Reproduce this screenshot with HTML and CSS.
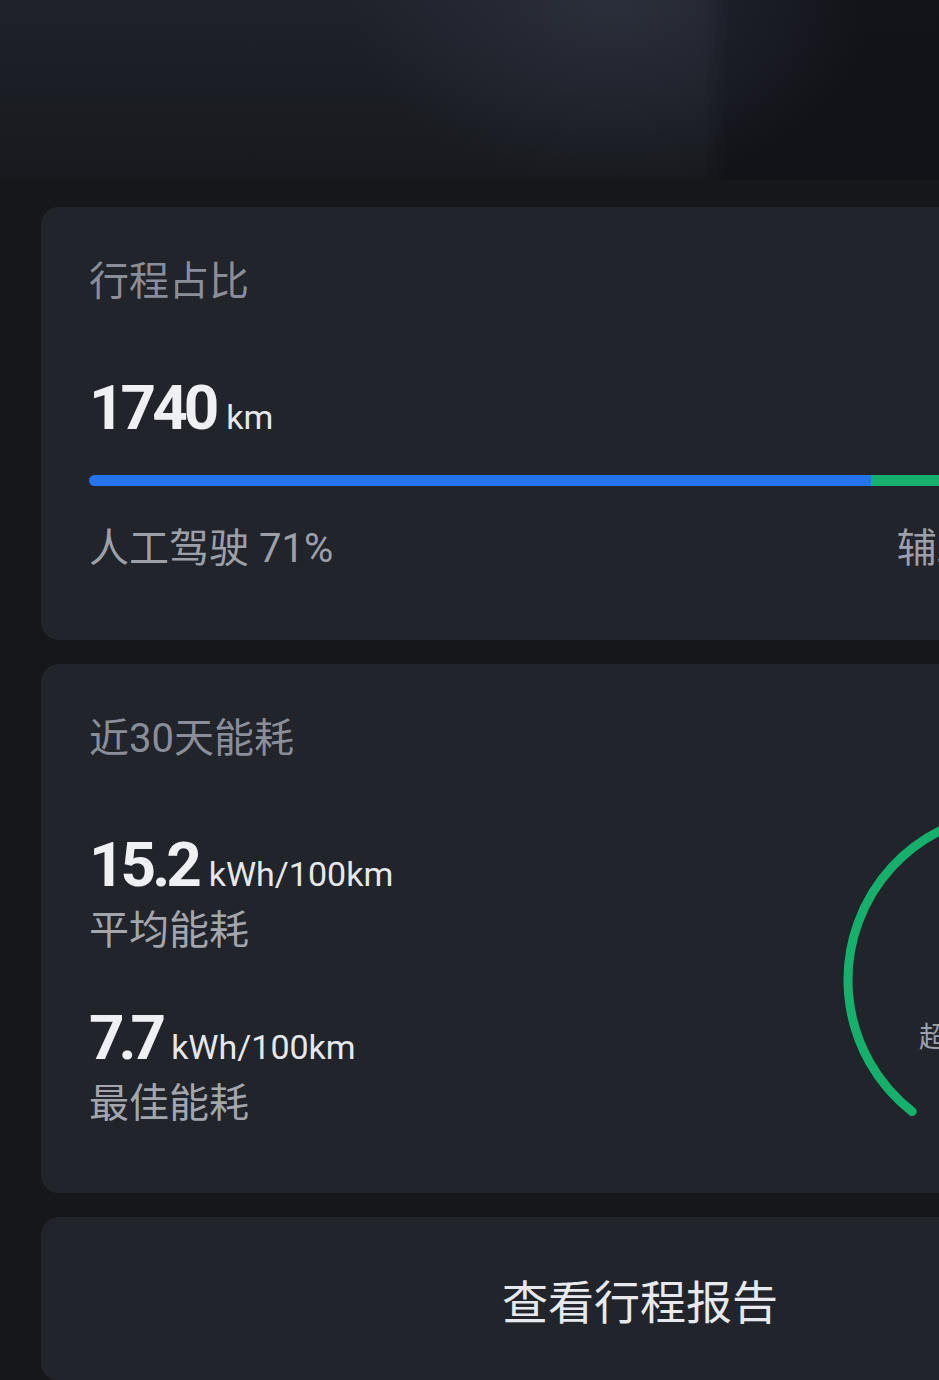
FILE: index.html
```html
<!DOCTYPE html>
<html lang="zh-CN">
<head>
    <meta charset="UTF-8">
    <meta name="viewport" content="width=device-width, initial-scale=1.0">
    <title>行程统计</title>
    <link rel="stylesheet" href="styles.css">
</head>
<body>
    <div class="page">
        <div class="hero"></div>

        <div class="cards">
            <section class="card trip">
                <h2 class="card-title">行程占比</h2>
                <div class="figure trip-total">
                    <span class="num">1740</span>
                    <span class="unit">km</span>
                </div>
                <div class="ratio-bar">
                    <span class="seg manual" style="width: 71%"></span>
                    <span class="seg assist"></span>
                </div>
                <div class="ratio-labels">
                    <span>人工驾驶 71%</span>
                    <span class="assist-label">辅助驾驶 29%</span>
                </div>
            </section>

            <section class="card energy">
                <h2 class="card-title">近30天能耗</h2>
                <div class="energy-body">
                    <div class="stats">
                        <div class="stat">
                            <div class="figure">
                                <span class="num">15.2</span>
                                <span class="unit">kWh/100km</span>
                            </div>
                            <div class="stat-label">平均能耗</div>
                        </div>
                        <div class="stat">
                            <div class="figure">
                                <span class="num tight">7.7</span>
                                <span class="unit">kWh/100km</span>
                            </div>
                            <div class="stat-label">最佳能耗</div>
                        </div>
                    </div>
                    <div class="gauge">
                        <svg width="352" height="352" viewBox="0 0 352 352">
                            <path d="M73.2 307.6 A167 167 0 1 1 278.8 307.6" fill="none" stroke="#16b06d" stroke-width="9" stroke-linecap="round"/>
                        </svg>
                        <div class="gauge-label">超越92%的车主</div>
                    </div>
                </div>
            </section>

            <a class="card report-link" href="#">查看行程报告</a>
        </div>
    </div>
</body>
</html>
```

FILE: styles.css
```css
html, body {
    margin: 0;
    overflow: hidden;
}
body {
    background-color: #15171b;
    font-family: Roboto, "Noto Sans CJK SC", sans-serif;
}
.page {
    width: 1280px;
}
.hero {
    height: 180px;
    background:
        radial-gradient(ellipse 260px 190px at 610px 0, rgba(52, 57, 72, 0.55), rgba(52, 57, 72, 0)),
        linear-gradient(90deg, rgba(17, 18, 24, 0) 700px, rgba(17, 18, 24, 0.9) 730px),
        linear-gradient(180deg, #1f222a, #17191e);
}
.cards {
    display: flex;
    flex-direction: column;
    gap: 24px;
    padding: 27px 0 0 41px;
}
.card {
    box-sizing: border-box;
    width: 1198px;
    padding: 55px 48px 71px;
    background-color: #21242b;
    border-radius: 18px;
}
.card-title {
    margin: 0;
    font-size: 40px;
    line-height: 40px;
    font-weight: 400;
    color: #8a8e9a;
}
.figure {
    display: flex;
    align-items: baseline;
    height: 62px;
    color: #eef0f3;
}
.num {
    font-size: 62px;
    line-height: 62px;
    font-weight: 700;
    letter-spacing: -4px;
}
.num.tight {
    letter-spacing: -6px;
}
.unit {
    margin-left: 11px;
    font-size: 34px;
    line-height: 34px;
    color: #e6e8ec;
}
.trip-total {
    margin-top: 75px;
}
.ratio-bar {
    display: flex;
    height: 11px;
    margin-top: 36px;
    border-radius: 6px;
    overflow: hidden;
}
.manual {
    background-color: #2574ec;
}
.assist {
    flex: 1;
    background-color: #14b06c;
}
.ratio-labels {
    display: flex;
    justify-content: space-between;
    margin-top: 43px;
    font-size: 40px;
    line-height: 40px;
    color: #9da0a8;
}
.assist-label {
    margin-right: 50px;
}
.energy {
    padding-bottom: 37px;
}
.energy-body {
    display: flex;
    justify-content: space-between;
    align-items: flex-start;
}
.stats {
    padding-top: 75px;
}
.stat + .stat {
    margin-top: 56px;
}
.stat-label {
    margin-top: 15px;
    font-size: 40px;
    line-height: 40px;
    color: #a3a6ad;
}
.gauge {
    position: relative;
    flex-shrink: 0;
    width: 352px;
    height: 352px;
    margin-top: 45px;
}
.gauge svg {
    display: block;
}
.gauge-label {
    position: absolute;
    left: 0;
    right: 0;
    top: 220px;
    text-align: center;
    font-size: 28px;
    line-height: 28px;
    color: #9da0a8;
}
.report-link {
    display: flex;
    align-items: center;
    justify-content: center;
    height: 164px;
    padding: 0;
    font-size: 46px;
    color: #e7e9ee;
    text-decoration: none;
}
```
